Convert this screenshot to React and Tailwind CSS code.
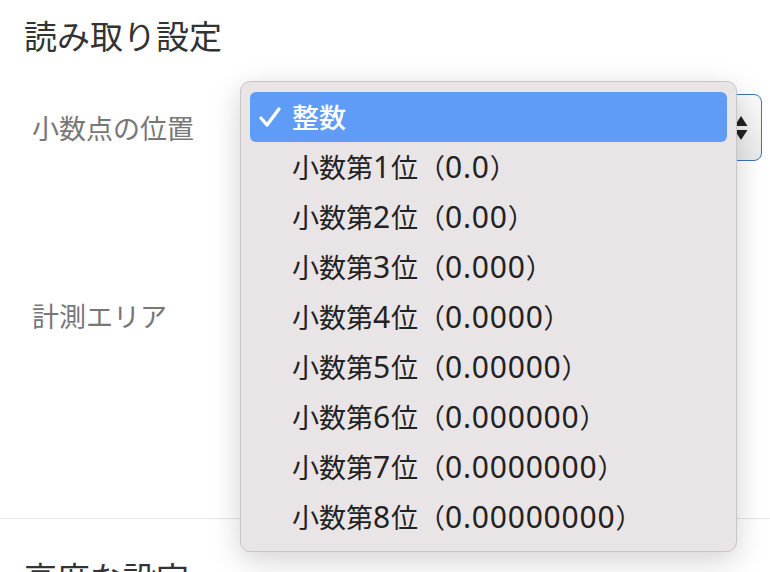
import React from "react";

const items = [
  ["1", "0.0"],
  ["2", "0.00"],
  ["3", "0.000"],
  ["4", "0.0000"],
  ["5", "0.00000"],
  ["6", "0.000000"],
  ["7", "0.0000000"],
  ["8", "0.00000000"],
];

function Num({ children }) {
  return <span className="font-['Noto_Sans',sans-serif] text-[30px] tracking-[0.8px]">{children}</span>;
}

export default function App() {
  return (
    <div className="relative h-[572px] w-[770px] overflow-hidden bg-white font-['Noto_Sans_CJK_JP','Noto_Sans',sans-serif]">
      <h2 className="pl-6 pt-[13px] text-[33px] leading-[44px] text-[#333]">読み取り設定</h2>

      <div className="mt-[37px] flex items-center">
        <label className="w-[240px] pl-8 text-[27px] leading-[36px] text-[#777]">小数点の位置</label>
        <div className="mr-[8px] flex h-[67px] flex-1 items-center justify-end rounded-[8px] border-[1.5px] border-[#3d74b6] bg-gradient-to-b from-[#fbfbfb] to-[#e9e9e9] pr-[13px]">
          <svg width="14" height="26" viewBox="0 0 14 26">
            <path d="M7 1 L13.5 11 L0.5 11 Z" fill="#222" />
            <path d="M7 25 L13.5 15 L0.5 15 Z" fill="#222" />
          </svg>
        </div>
      </div>

      <div className="h-[190px] pt-[137px]">
        <label className="block pl-8 text-[27px] leading-[36px] text-[#777]">計測エリア</label>
      </div>

      <div className="mt-[167px] border-t border-[#e6e6e6]" />
      <h2 className="pl-6 pt-[36px] text-[33px] leading-[44px] text-[#333]">高度な設定</h2>

      <div className="absolute left-[240px] top-[81px] w-[497px] rounded-[10px] border border-[#c9c5c7] bg-[#e9e4e6] px-[9px] pb-[9px] pt-[10px] shadow-[0_8px_30px_rgba(0,0,0,0.18)]">
        <div className="relative flex h-[50px] items-center rounded-[6px] bg-[#5f9cf7] pl-[42px] text-[27px] font-medium text-white">
          <svg className="absolute left-[8px] top-[13px]" width="24" height="24" viewBox="0 0 24 24">
            <path d="M3 13 L9 20 L21 4" fill="none" stroke="#fff" strokeWidth="3.4" strokeLinecap="round" strokeLinejoin="round" />
          </svg>
          整数
        </div>
        {items.map(([d, z]) => (
          <div key={d} className="flex h-[50px] items-center whitespace-pre pl-[42px] text-[27px] leading-[50px] text-[#222]">
            <span>
              小数第<Num>{d}</Num>位（<Num>{z}</Num>）
            </span>
          </div>
        ))}
      </div>
    </div>
  );
}
